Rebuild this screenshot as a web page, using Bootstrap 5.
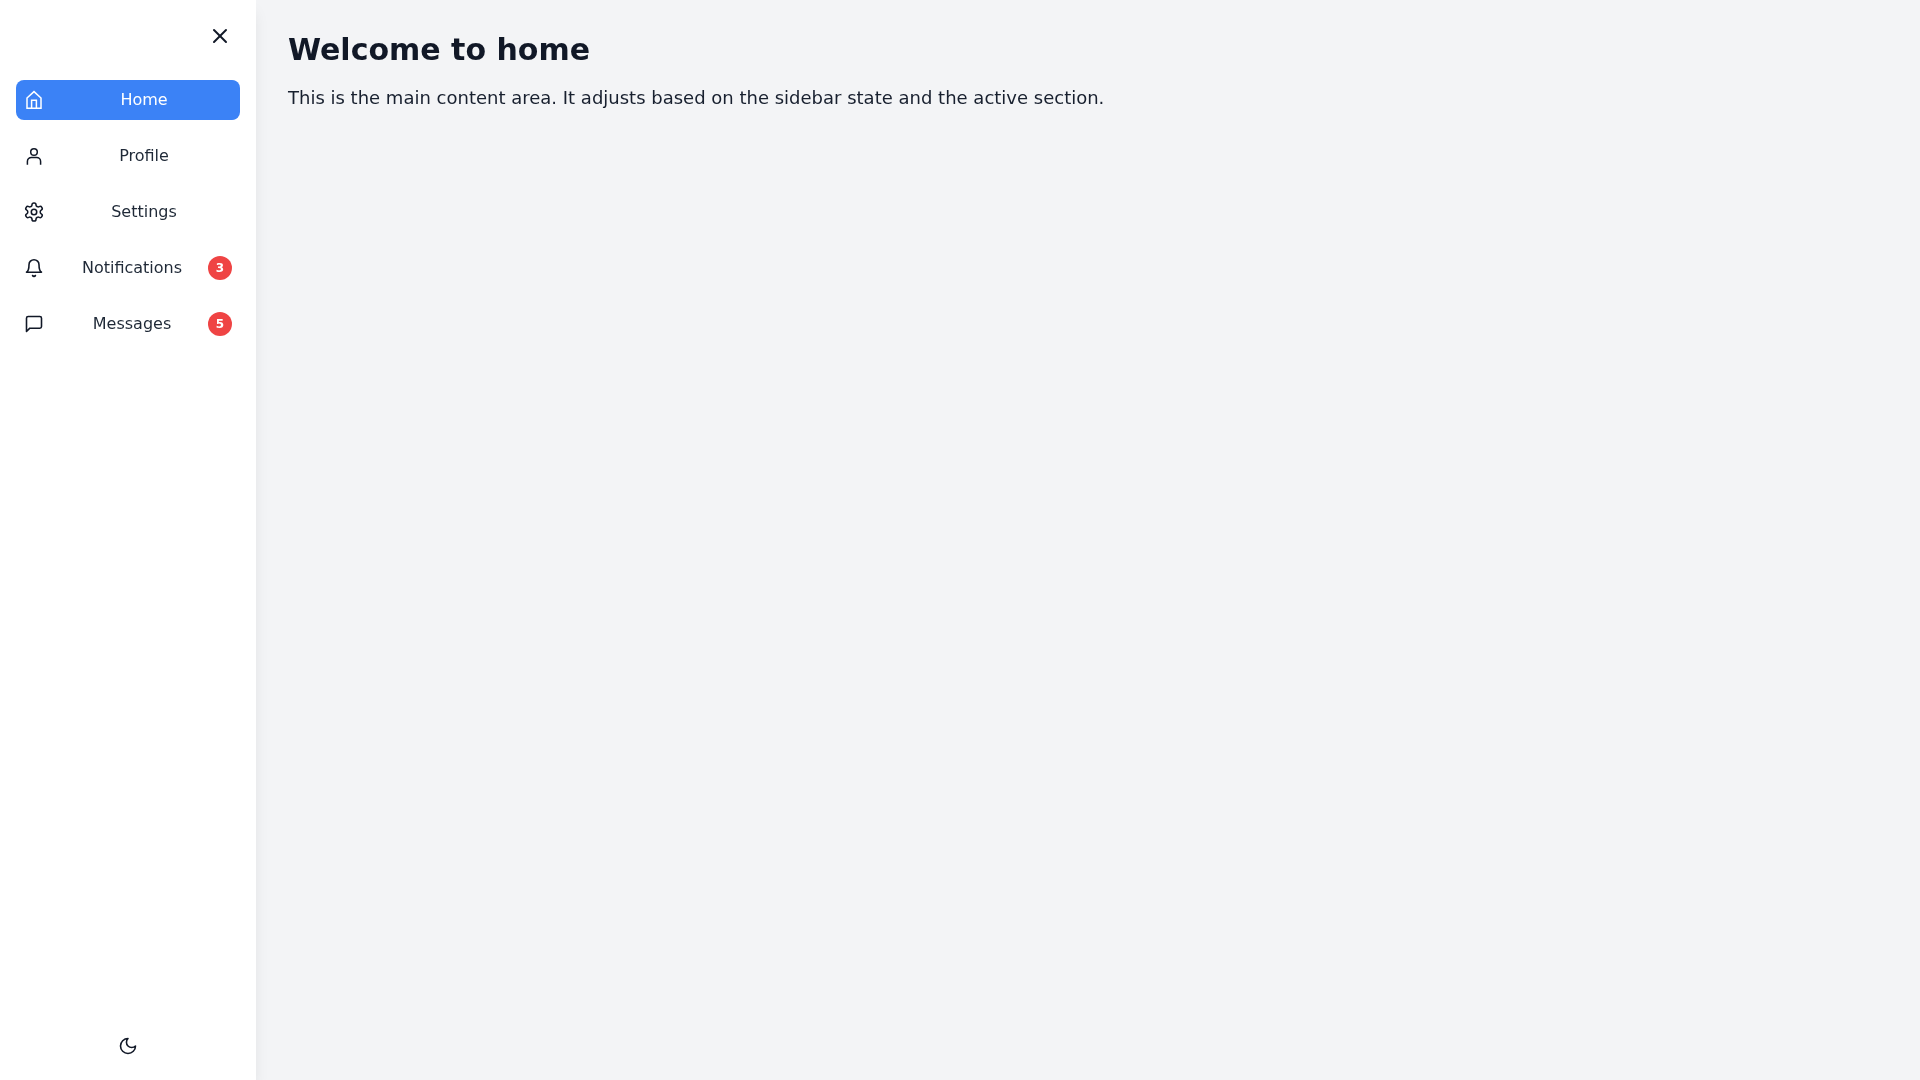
<!DOCTYPE html>
<html lang="en">
<head>
<meta charset="utf-8">
<title>Dashboard</title>
<link href="https://cdn.jsdelivr.net/npm/bootstrap@5.3.0/dist/css/bootstrap.min.css" rel="stylesheet">
<style>
html, body { height: 100%; }
body { font-family: "DejaVu Sans", sans-serif; background: #f3f4f6; color: #1f2937; }
.app-shell { height: 100vh; }
.side-panel { width: 256px; flex: 0 0 256px; padding: 16px; background: #fff; box-shadow: 0 10px 15px -3px rgba(0,0,0,.1), 0 4px 6px -4px rgba(0,0,0,.1); will-change: transform; }
.icon-btn { padding: 8px; background: none; border: 0; color: #111827; line-height: 0; border-radius: 9999px; }
.side-top { margin-bottom: 24px; }
.side-nav { gap: 16px; }
.side-item { height: 40px; padding: 8px; width: 100%; border: 0; background: transparent; border-radius: 8px; color: #1f2937; font-size: 16px; line-height: 24px; }
.side-item.is-current { background: #3b82f6; color: #fff; }
.side-item svg { flex: 0 0 20px; color: #111827; }
.side-item.is-current svg { color: #fff; }
.side-label { flex: 1 1 0; margin-left: 12px; text-align: center; }
.count-pill { width: 24px; height: 24px; flex: 0 0 24px; border-radius: 50%; background: #ef4444; color: #fff; font-size: 12px; font-weight: 700; line-height: 16px; }
.main-pane { padding: 32px; will-change: transform; }
.main-title { font-size: 30px; line-height: 36px; font-weight: 700; color: #111827; margin: 0 0 16px; }
.main-text { font-size: 18px; line-height: 28px; color: #18202f; margin: 0; }
.lu { fill: none; stroke: currentColor; stroke-width: 2; stroke-linecap: round; stroke-linejoin: round; display: block; }
.lu-fine { stroke-width: 1.9; }
.lu-gear { stroke-width: 1.7; }
.lu-thin { stroke-width: 1.5; stroke-linecap: square; stroke-linejoin: miter; }
</style>
</head>
<body>
<div class="app-shell d-flex">
  <aside class="side-panel d-flex flex-column">
    <div class="side-top d-flex justify-content-end">
      <button class="icon-btn" type="button" aria-label="Close sidebar">
        <svg class="lu" width="24" height="24" viewBox="0 0 24 24"><path d="M18 6 6 18"/><path d="m6 6 12 12"/></svg>
      </button>
    </div>
    <nav class="side-nav d-flex flex-column flex-grow-1">
      <button class="side-item is-current d-flex align-items-center" type="button">
        <svg class="lu lu-thin" width="20" height="20" viewBox="0 0 20 20"><path d="M3 8 10 1.6 17 8V18.2H3Z"/><path d="M7.6 18V10.2h4.8V18"/></svg>
        <span class="side-label">Home</span>
      </button>
      <button class="side-item d-flex align-items-center" type="button">
        <svg class="lu lu-thin" width="20" height="20" viewBox="0 0 20 20"><path d="M3.4 18v-2.6a4 4 0 0 1 4-4h5.2a4 4 0 0 1 4 4V18"/><circle cx="10" cy="6" r="3.3"/></svg>
        <span class="side-label">Profile</span>
      </button>
      <button class="side-item d-flex align-items-center" type="button">
        <svg class="lu lu-gear" width="20" height="20" viewBox="1 1 22 22"><path d="M12.22 2h-.44a2 2 0 0 0-2 2v.18a2 2 0 0 1-1 1.73l-.43.25a2 2 0 0 1-2 0l-.15-.08a2 2 0 0 0-2.73.73l-.22.38a2 2 0 0 0 .73 2.73l.15.1a2 2 0 0 1 1 1.72v.51a2 2 0 0 1-1 1.74l-.15.09a2 2 0 0 0-.73 2.73l.22.38a2 2 0 0 0 2.73.73l.15-.08a2 2 0 0 1 2 0l.43.25a2 2 0 0 1 1 1.73V20a2 2 0 0 0 2 2h.44a2 2 0 0 0 2-2v-.18a2 2 0 0 1 1-1.73l.43-.25a2 2 0 0 1 2 0l.15.08a2 2 0 0 0 2.73-.73l.22-.39a2 2 0 0 0-.73-2.73l-.15-.08a2 2 0 0 1-1-1.74v-.5a2 2 0 0 1 1-1.74l.15-.09a2 2 0 0 0 .73-2.73l-.22-.38a2 2 0 0 0-2.73-.73l-.15.08a2 2 0 0 1-2 0l-.43-.25a2 2 0 0 1-1-1.73V4a2 2 0 0 0-2-2z"/><circle cx="12" cy="12" r="3"/></svg>
        <span class="side-label">Settings</span>
      </button>
      <button class="side-item d-flex align-items-center" type="button">
        <svg class="lu lu-fine" width="20" height="20" viewBox="0 0 24 24"><path d="M6 8a6 6 0 0 1 12 0c0 7 3 9 3 9H3s3-2 3-9"/><path d="M10.3 21a1.94 1.94 0 0 0 3.4 0"/></svg>
        <span class="side-label">Notifications</span>
        <span class="count-pill d-flex align-items-center justify-content-center">3</span>
      </button>
      <button class="side-item d-flex align-items-center" type="button">
        <svg class="lu lu-fine" width="20" height="20" viewBox="0 0 24 24"><path d="M21 15a2 2 0 0 1-2 2H7l-4 4V5a2 2 0 0 1 2-2h14a2 2 0 0 1 2 2z"/></svg>
        <span class="side-label">Messages</span>
        <span class="count-pill d-flex align-items-center justify-content-center">5</span>
      </button>
    </nav>
    <div class="d-flex justify-content-center">
      <button class="icon-btn" type="button" aria-label="Toggle theme">
        <svg class="lu lu-fine" width="20" height="20" viewBox="0 0 24 24"><path d="M12 3a6 6 0 0 0 9 9 9 9 0 1 1-9-9Z"/></svg>
      </button>
    </div>
  </aside>
  <main class="main-pane flex-grow-1">
    <h1 class="main-title">Welcome to home</h1>
    <p class="main-text">This is the main content area. It adjusts based on the sidebar state and the active section.</p>
  </main>
</div>
<script src="https://cdn.jsdelivr.net/npm/bootstrap@5.3.0/dist/js/bootstrap.bundle.min.js"></script>
</body>
</html>
